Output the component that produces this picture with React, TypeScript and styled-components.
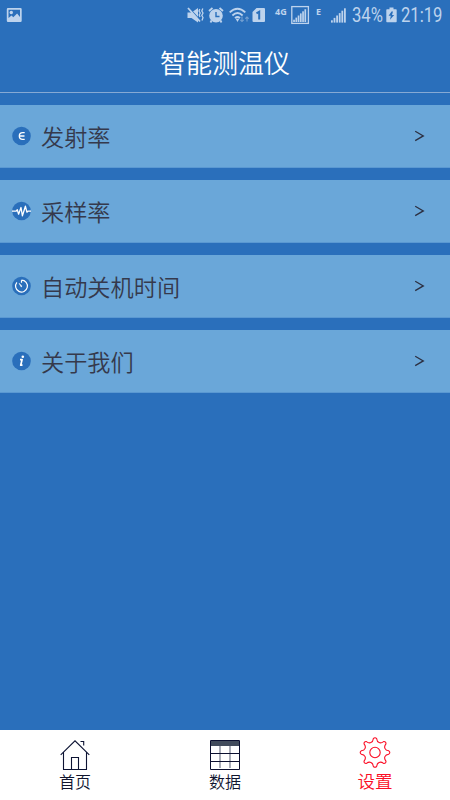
import React from 'react';
import styled, { createGlobalStyle } from 'styled-components';

const GlobalStyle = createGlobalStyle`
  * { box-sizing: border-box; }
  body { margin: 0; }
`;

const cjk = `'Noto Sans CJK SC', sans-serif`;
const cjkSoft = `'Noto Sans CJK SC DemiLight', 'Noto Sans CJK SC', sans-serif`;
const tint = '#bdd3ed';
const blue = '#2a6fbb';

const Screen = styled.div`
  width: 450px;
  height: 800px;
  display: flex;
  flex-direction: column;
  overflow: hidden;
  background: ${blue};
  font-family: ${cjk};
`;

const StatusBar = styled.div`
  height: 32px;
  flex: none;
  display: flex;
  align-items: flex-start;
  padding: 7px 0 0 6px;
  color: ${tint};
  svg { display: block; flex: none; overflow: visible; }
`;

const Slot = styled.div<{ $w: number; $gap?: number }>`
  width: ${p => p.$w}px;
  height: 17px;
  margin-left: ${p => p.$gap ?? 0}px;
  flex: none;
  white-space: nowrap;
`;

const StatusText = styled(Slot)`
  font: 400 19.6px/18px Roboto, sans-serif;
  span { display: inline-block; transform-origin: 0 50%; transform: scaleX(0.85); }
`;

const NetText = styled(Slot)`
  font: 700 9px/10px 'Noto Sans', sans-serif;
`;

const Header = styled.header`
  height: 61px;
  flex: none;
  display: flex;
  align-items: center;
  justify-content: center;
  border-bottom: 1px solid #86a9d4;
  color: #fff;
  font-family: ${cjkSoft};
  font-weight: 350;
  font-size: 26px;
  line-height: 60px;
`;

const List = styled.main`
  flex: 1;
  display: flex;
  flex-direction: column;
  gap: 12px;
  padding-top: 12px;
`;

const Row = styled.div`
  height: 63px;
  display: flex;
  align-items: center;
  padding: 0 25px 0 12px;
  background: #6aa7d9;
  border-bottom: 1px solid #5a98d2;
  color: #35394c;
`;

const RowLabel = styled.span`
  flex: 1;
  margin-left: 10px;
  font-family: ${cjkSoft};
  font-size: 23.2px;
  font-weight: 350;
  line-height: 62px;
`;

const TabBar = styled.nav`
  height: 70px;
  flex: none;
  display: flex;
  background: #fff;
`;

const Tab = styled.div<{ $active?: boolean }>`
  flex: 1;
  display: flex;
  flex-direction: column;
  align-items: center;
  padding-top: ${p => (p.$active ? 6 : 8)}px;
  color: ${p => (p.$active ? '#fb0d25' : '#10152f')};
  font-family: ${cjkSoft};
  font-weight: 350;
  font-size: ${p => (p.$active ? 17.5 : 16)}px;
  line-height: 24px;
  svg { display: block; }
`;

const TabLabel = styled.span<{ $active?: boolean }>`
  margin-top: ${p => (p.$active ? 0 : -1)}px;
`;

const Badge = ({ children }: { children: React.ReactNode }) => (
  <svg width="19" height="20" viewBox="0 0 19 20" fill="none" stroke="#fff">
    <circle cx="9.5" cy="10" r="9.3" fill={blue} stroke="none" />
    {children}
  </svg>
);

const EmissivityIcon = () => (
  <Badge><path d="M12.7 6.6h-2a3.4 3.4 0 0 0 0 6.8h2M7.5 10h5" strokeWidth="1.3" /></Badge>
);
const SampleIcon = () => (
  <Badge><path d="M0 10.2h4l1.3-1.4 1.3 4.4L9 6.5l1.4 8.3 3-9.6 1.5 6 1-1H19" strokeWidth="1.3" strokeLinejoin="round" /></Badge>
);
const TimerIcon = () => (
  <Badge>
    <path d="M9.5 4.2v2.6M9.5 4.2a5.9 5.9 0 1 1-4.6 2.2" strokeWidth="1.2" />
    <path d="M7 7.2l3.1 3-.9.8z" fill="#fff" strokeWidth=".5" />
  </Badge>
);
const InfoIcon = () => (
  <Badge>
    <circle cx="10.8" cy="5.7" r="1.3" fill="#fff" stroke="none" />
    <path d="M8 8.6h2.1L8.7 14.2h1.8" strokeWidth="1.7" strokeLinejoin="round" />
  </Badge>
);

const Chevron = () => (
  <svg width="11" height="12" viewBox="0 0 11 12" fill="none" stroke="#2c3042" strokeWidth="1.3">
    <path d="M1.2 1.2L9.3 5.9L1.2 10.6" />
  </svg>
);

const bars = [0, 1, 2, 3, 4, 5];

const HomeIcon = () => (
  <svg width="30" height="32" viewBox="0 0 30 32" fill="none" stroke="#0c1333" strokeWidth="1.1">
    <path d="M.7 16.8L15 2.8l14.3 14M3.5 14.5v17M26.5 14.5v17M3 31.5h24M11.5 31V19.5h7V31M20.5 3.5h3.2v4" />
  </svg>
);
const TableIcon = () => (
  <svg width="30" height="32" viewBox="0 0 30 32">
    <path d="M1 3h28v5H1z" fill="#414b5c" />
    <path d="M10 8v22M20 8v22" stroke="#9da0ad" strokeWidth="1.7" />
    <path d="M.5 2.5h29v29H.5zM0 15.5h30M0 23.5h30" fill="none" stroke="#0c1030" />
  </svg>
);

const tooth = (k: number) => {
  const point = (deg: number, r: number) => {
    const a = ((k * 45 + deg) * Math.PI) / 180;
    return `${(16 + r * Math.sin(a)).toFixed(2)} ${(16.5 - r * Math.cos(a)).toFixed(2)}`;
  };
  return `${k ? 'L' : 'M'}${point(-7, 13.9)}Q${point(0, 15.8)} ${point(7, 13.9)}` +
    `C${point(12, 10)} ${point(33, 10)} ${point(38, 13.9)}`;
};
const gearPath = [0, 1, 2, 3, 4, 5, 6, 7].map(tooth).join('') + 'Z';

const GearIcon = () => (
  <svg width="32" height="33" viewBox="0 0 32 33" fill="none" stroke="#fb0d25" strokeWidth="1.1">
    <path d={gearPath} strokeLinejoin="round" />
    <circle cx="16" cy="16.5" r="5.2" />
  </svg>
);

const rows = [
  { label: '发射率', Icon: EmissivityIcon },
  { label: '采样率', Icon: SampleIcon },
  { label: '自动关机时间', Icon: TimerIcon },
  { label: '关于我们', Icon: InfoIcon },
];

export default function App() {
  return (
    <Screen>
      <GlobalStyle />
      <StatusBar>
        <Slot $w={16}>
          <svg width="16" height="16" viewBox="0 0 16 16">
            <path fill={tint} fillRule="evenodd" d="M2 1h12.5q1.2 0 1.2 1.2v11.6q0 1.2-1.2 1.2H2Q.8 15 .8 13.8V2.2Q.8 1 2 1zM2.5 2.7V11l3-2.5 1.8 1.8 3.8-3.7L14 10V2.7z" />
            <circle cx="5.3" cy="5.5" r="1.7" fill={tint} />
          </svg>
        </Slot>
        <Slot $w={18} $gap={165}>
          <svg width="18" height="17" viewBox="0 0 18 17" fill="none" stroke={tint}>
            <path d="M.5 5.5h4L11 1v14.5L4.5 11h-4z" fill={tint} stroke="none" />
            <path d="M2.5 1.5l11 12" stroke={blue} strokeWidth="1.2" />
            <path d="M1 1l12 13.5" strokeWidth="1.8" />
            <path d="M12.8 2l-.8 2 1.2 2-1 2 .8 2M15.8 1.5l-1 2.5 1.2 2-1.2 2.5 1.2 2-1 3" strokeWidth="1.3" />
          </svg>
        </Slot>
        <Slot $w={16} $gap={3}>
          <svg width="16" height="17" viewBox="0 0 16 17">
            <circle cx="8" cy="8.8" r="6.8" fill={tint} />
            <path d="M1 4L4.5 1M15 4l-3.5-3M3.5 13.5L2.5 15.5M12.5 13.5l1 2" stroke={tint} strokeWidth="1.8" />
            <path d="M8 5v4.5h3.5" fill="none" stroke={blue} strokeWidth="1.4" />
          </svg>
        </Slot>
        <Slot $w={21} $gap={5}>
          <svg width="21" height="17" viewBox="0 0 21 17" fill="none" stroke={tint} strokeWidth="1.8">
            <path d="M.7 5.4Q8.5-2 16.3 5.4M3.4 8.5q5.1-5 10.2 0M6 11.2q2.5-2.4 5 0" />
            <path d="M6.7 11.8h3.6L8.5 15z" fill={tint} stroke="none" />
            <path d="M13 9.5v5M11.3 12.8l1.7 1.7 1.7-1.7M18 14.5V10M16.3 11.7L18 10l1.7 1.7" stroke="#739fd1" strokeWidth="1.1" />
          </svg>
        </Slot>
        <Slot $w={14} $gap={2}>
          <svg width="14" height="17" viewBox="0 0 14 17">
            <path d="M4.5 1H12q1 0 1 1v12q0 1-1 1H1.5q-1 0-1-1V5z" fill={tint} />
            <path d="M4.5 6.3l2.7-1.6v7.8" fill="none" stroke={blue} strokeWidth="2" />
          </svg>
        </Slot>
        <NetText $w={13} $gap={9}>4G</NetText>
        <Slot $w={18} $gap={3}>
          <svg width="18" height="18" viewBox="0 0 18 18">
            <rect x=".8" y="-.4" width="16.6" height="16.8" fill="none" stroke={tint} strokeWidth="1.3" />
            {bars.map(i => <rect key={i} x={2.2 + i * 2.25} y={12.7 - i * 2.1} width="1.7" height={2.3 + i * 2.1} fill={tint} />)}
          </svg>
        </Slot>
        <NetText $w={7} $gap={7}>E</NetText>
        <Slot $w={17} $gap={7}>
          <svg width="17" height="17" viewBox="0 0 17 17">
            {bars.map(i => <rect key={i} x={1 + i * 2.6} y={13.3 - i * 2.4} width="1.8" height={2.3 + i * 2.4} fill={tint} />)}
          </svg>
        </Slot>
        <StatusText $w={31} $gap={5}><span>34%</span></StatusText>
        <Slot $w={11} $gap={3}>
          <svg width="11" height="17" viewBox="0 0 11 17">
            <path d="M3.5.5h4v1.7H10q.7 0 .7.8v11.5q0 .8-.7.8H1q-.7 0-.7-.8V3q0-.8.7-.8h2.5z" fill={tint} />
            <path d="M5.5 4.5L2.6 8.7h2.2L4 12.8 8.2 8H6l1-3.5z" fill={blue} />
          </svg>
        </Slot>
        <StatusText $w={43} $gap={4}><span>21:19</span></StatusText>
      </StatusBar>
      <Header>智能测温仪</Header>
      <List>
        {rows.map(({ label, Icon }) => (
          <Row key={label}>
            <Icon />
            <RowLabel>{label}</RowLabel>
            <Chevron />
          </Row>
        ))}
      </List>
      <TabBar>
        <Tab><HomeIcon /><TabLabel>首页</TabLabel></Tab>
        <Tab><TableIcon /><TabLabel>数据</TabLabel></Tab>
        <Tab $active><GearIcon /><TabLabel $active>设置</TabLabel></Tab>
      </TabBar>
    </Screen>
  );
}
